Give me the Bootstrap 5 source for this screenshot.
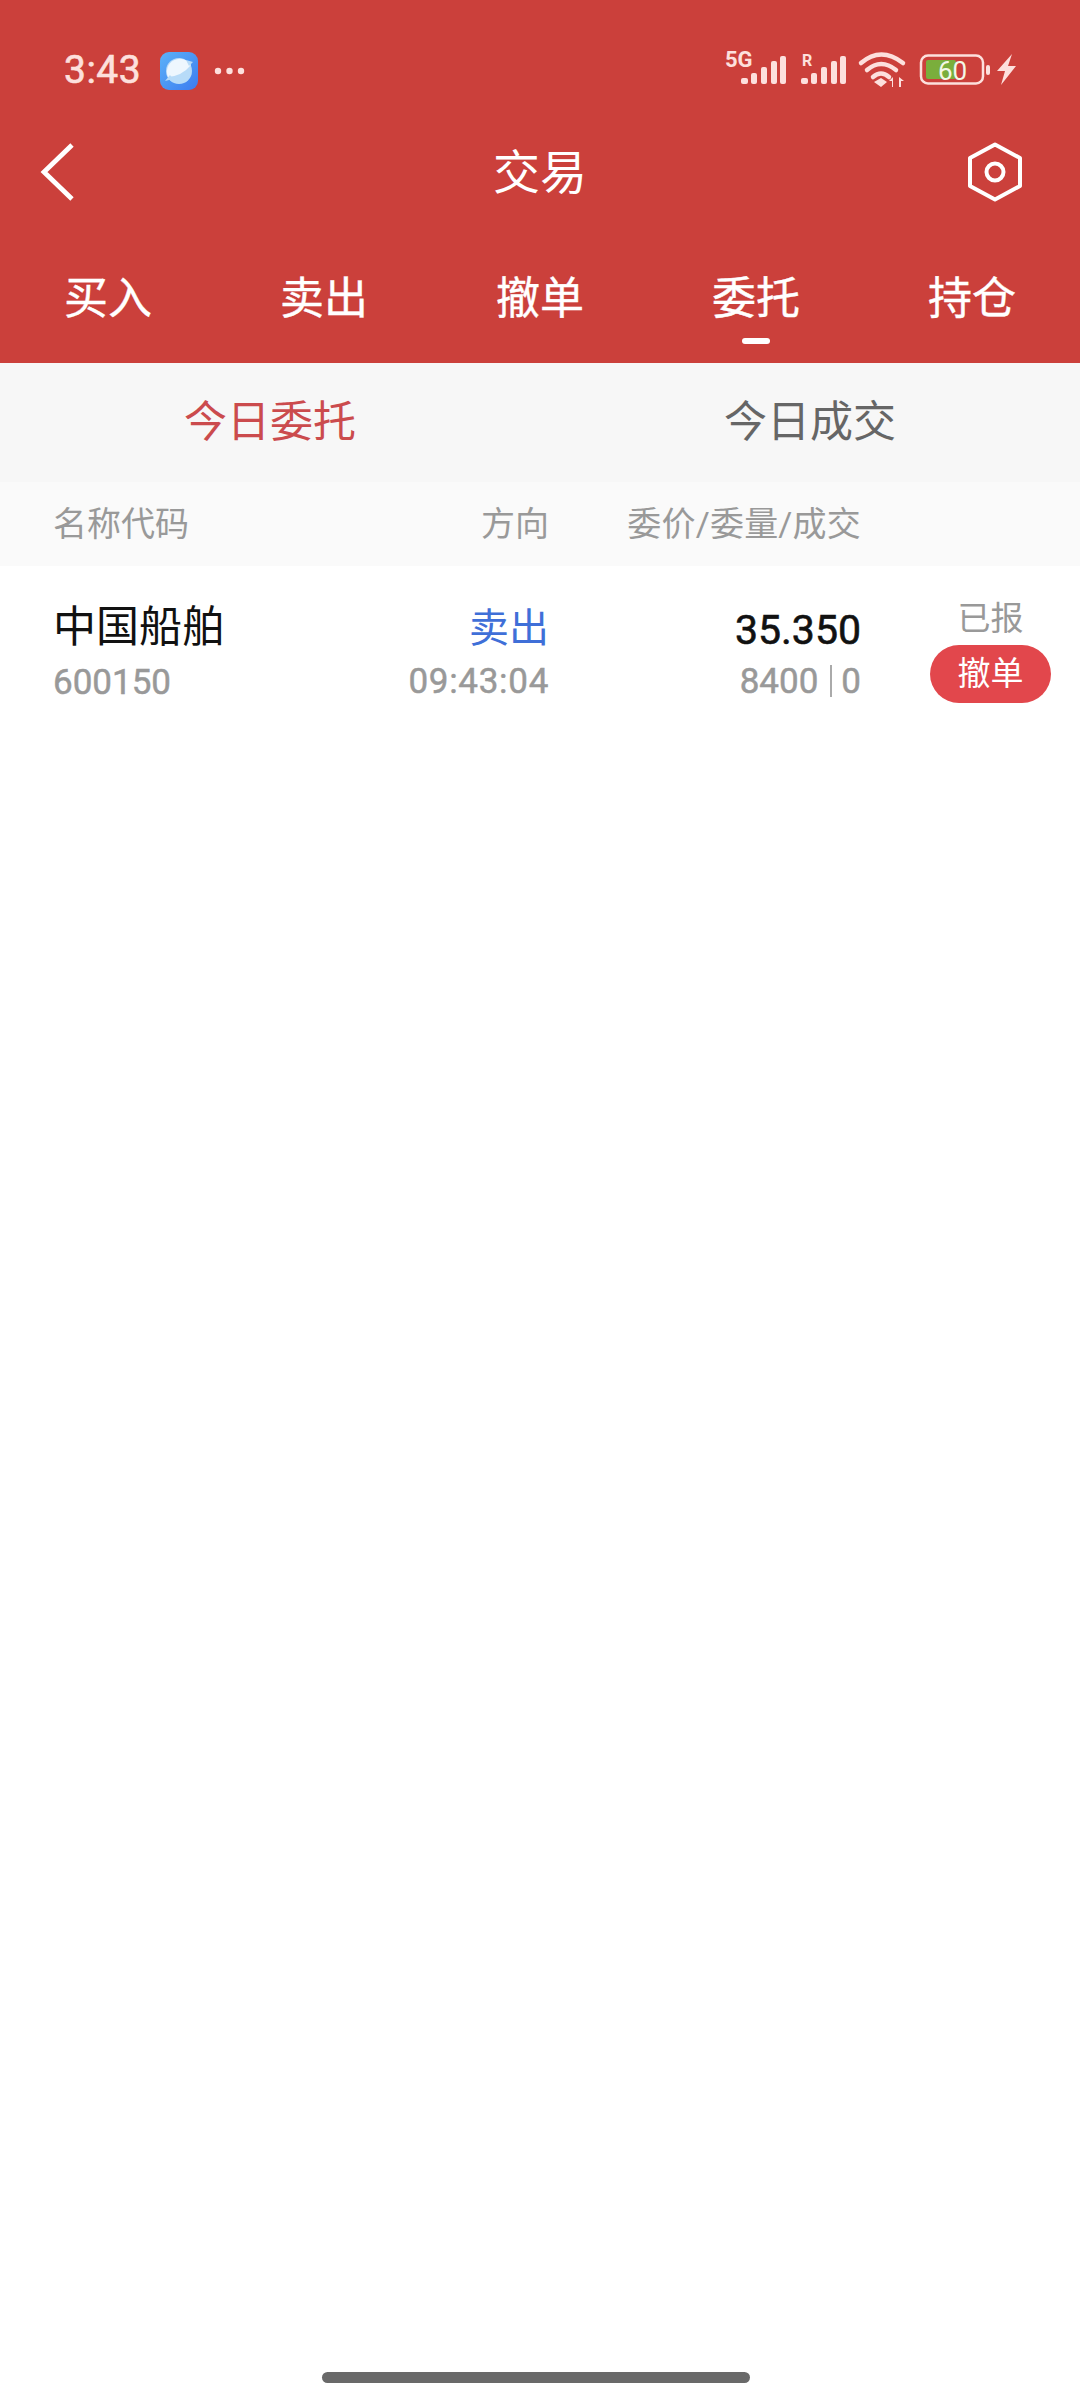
<!DOCTYPE html>
<html lang="zh-CN">
<head>
  <meta charset="UTF-8">
  <title>交易</title>
  <link href="https://cdn.jsdelivr.net/npm/bootstrap@5.3.3/dist/css/bootstrap.min.css" rel="stylesheet">
  <style>
    body { background: #fff; font-family: Roboto, "Noto Sans CJK SC", sans-serif; height: 2400px; position: relative; overflow: hidden; }
    .top-red { background: #cb403b; height: 363px; color: #fff; }
    .status-line { height: 112px; padding: 36px 64px 0 64px; color: #fde0dd; }
    .clock { font-size: 39px; line-height: 68px; width: 80px; letter-spacing: .5px; -webkit-text-stroke: .6px #fde0dd; }
    .title-line { height: 120px; padding: 0 58px 0 40px; }
    .side-left { width: 118px; }
    .side-right { width: 100px; }
    .title-text { font-size: 47px; line-height: 1; }
    .main-tabs { padding: 0 64px; height: 131px; }
    .main-tab { font-size: 44px; line-height: 60px; position: relative; padding-top: 37px; -webkit-text-stroke: .4px #fff; }
    .tab-mark { position: absolute; left: 30px; top: 106px; width: 28px; height: 6px; border-radius: 3px; background: #fff; }
    .sub-tabs { background: #f7f7f7; height: 119px; }
    .sub-tab { width: 50%; text-align: center; font-size: 43px; line-height: 119px; color: #666; }
    .sub-tab.on { color: #cb4b4d; }
    .head-line { background: #fafafa; height: 84px; color: #999; font-size: 34px; line-height: 84px; padding-left: 53px; }
    .head-line .col-price { letter-spacing: .2px; }
    .order-line { padding: 0 0 0 53px; height: 140px; }
    .col-name { width: 300px; }
    .col-dir { width: 196px; text-align: right; }
    .col-price { width: 312px; text-align: right; }
    .col-state { width: 121px; margin-left: 69px; text-align: center; }
    .stock-name { font-size: 43px; line-height: 50px; color: #111; padding-top: 36px; }
    .stock-code { font-size: 35px; line-height: 40px; color: #999; margin-top: 11px; -webkit-text-stroke: .5px #999; }
    .dir-sell { font-size: 40px; line-height: 50px; color: #3f6fd8; padding-top: 38px; }
    .dir-time { font-size: 35px; line-height: 40px; color: #999; margin-top: 8px; letter-spacing: .7px; -webkit-text-stroke: .5px #999; }
    .price-num { font-size: 41px; line-height: 50px; color: #111; padding-top: 39px; -webkit-text-stroke: .6px #111; }
    .price-sub { font-size: 35px; line-height: 40px; color: #999; margin-top: 7px; -webkit-text-stroke: .5px #999; }
    .price-sep { display: inline-block; width: 2px; height: 32px; background: #aaa; margin: 0 9px 0 12px; vertical-align: -4px; }
    .state-text { font-size: 33px; line-height: 44px; color: #999; padding-top: 31px; }
    .cancel-pill { background: #e2474c; color: #fff; border: 0; border-radius: 29px; font-size: 33px; line-height: 58px; height: 58px; width: 121px; padding: 0; display: block; margin-top: 4px; }
    .home-bar { position: absolute; left: 322px; top: 2372px; width: 428px; height: 11px; border-radius: 6px; background: #696969; }
  </style>
</head>
<body>

<div class="top-red">
  <div class="status-line d-flex align-items-start">
    <div class="clock">3:43</div>
    <svg class="ms-3" width="38" height="38" viewBox="0 0 38 38" style="margin-top:16px">
      <defs><linearGradient id="pl" x1="0" y1="0" x2="1" y2="1"><stop offset="0" stop-color="#5cb2f8"/><stop offset="1" stop-color="#3c7bf0"/></linearGradient></defs>
      <rect width="38" height="38" rx="9" fill="url(#pl)"/>
      <circle cx="19" cy="19" r="13" fill="#b7dbf8"/>
      <path d="M8 25 A13 13 0 0 1 31 13 Q22 24 8 25Z" fill="#eef7fe"/>
      <path d="M5 29 L10 23 L13 27Z M33 10 L26 8 L29 14Z" fill="#b7dbf8"/>
    </svg>
    <svg class="ms-3" width="32" height="8" viewBox="0 0 32 8" style="margin-top:31px"><circle cx="4" cy="4" r="3.2" fill="#fde0dd"/><circle cx="15.5" cy="4" r="3.2" fill="#fde0dd"/><circle cx="27" cy="4" r="3.2" fill="#fde0dd"/></svg>
    <svg class="ms-auto" width="296" height="56" viewBox="725 40 296 56" style="margin-right:-5px;margin-top:4px">
      <g fill="#fde0dd">
        <text x="725" y="67" font-family="Roboto" font-size="22" font-weight="700">5G</text>
        <rect x="741" y="78" width="7" height="6" rx="2"/><rect x="751" y="73" width="6" height="11" rx="2"/><rect x="761" y="67" width="6" height="17" rx="2"/><rect x="771" y="61" width="6" height="23" rx="2"/><rect x="780" y="56" width="6" height="28" rx="2"/>
        <text x="802" y="66" font-family="Roboto" font-size="16" font-weight="700">R</text>
        <rect x="801" y="78" width="7" height="6" rx="2"/><rect x="811" y="73" width="6" height="11" rx="2"/><rect x="821" y="67" width="6" height="17" rx="2"/><rect x="831" y="61" width="6" height="23" rx="2"/><rect x="840" y="56" width="6" height="28" rx="2"/>
        <path d="M881 78l-7 4 7 5 6-5z"/>
        <path d="M892 87v-6h-3l4-4v10z M899 77v10h2v-6h3z"/>
      </g>
      <g fill="none" stroke="#fde0dd" stroke-width="4.500" stroke-linecap="round">
        <path d="M861 63 Q881 46 903 63"/><path d="M867 70 Q881 58 896 70"/><path d="M873 77 Q881 70 889 77"/>
      </g>
      <rect x="921" y="55.500" width="62" height="28" rx="7" fill="none" stroke="#fde0dd" stroke-width="2.500"/>
      <rect x="926" y="60" width="30" height="19" rx="2" fill="#7aae3c"/>
      <text x="938" y="80" font-family="Roboto" font-size="26" fill="#f3f7e6">60</text>
      <rect x="986" y="65" width="4" height="10" rx="2" fill="#fde0dd"/>
      <path d="M1012 54 L997 71 H1005 L1001 85 L1016 66 H1008Z" fill="#fde0dd"/>
    </svg>
  </div>

  <div class="title-line d-flex align-items-center justify-content-between">
    <div class="side-left">
      <svg class="d-block" width="34" height="58" viewBox="0 0 34 58"><path d="M32 2 L4 29 L32 56" fill="none" stroke="#fff" stroke-width="4.800"/></svg>
    </div>
    <div class="title-text">交易</div>
    <div class="side-right d-flex justify-content-end">
      <svg class="d-block" width="54" height="60" viewBox="0 0 54 60"><path d="M27 2.500 L52 16 V44 L27 57.500 L2 44 V16Z" fill="none" stroke="#fff" stroke-width="4" stroke-linejoin="round"/><circle cx="27" cy="30" r="8.500" fill="none" stroke="#fff" stroke-width="4"/></svg>
    </div>
  </div>

  <div class="main-tabs d-flex justify-content-between">
    <div class="main-tab">买入</div>
    <div class="main-tab">卖出</div>
    <div class="main-tab">撤单</div>
    <div class="main-tab">委托<span class="tab-mark"></span></div>
    <div class="main-tab">持仓</div>
  </div>
</div>

<div class="sub-tabs d-flex">
  <div class="sub-tab on">今日委托</div>
  <div class="sub-tab">今日成交</div>
</div>

<div class="head-line d-flex">
  <div class="col-name">名称代码</div>
  <div class="col-dir">方向</div>
  <div class="col-price">委价/委量/成交</div>
</div>

<div class="order-line d-flex">
  <div class="col-name">
    <div class="stock-name">中国船舶</div>
    <div class="stock-code">600150</div>
  </div>
  <div class="col-dir">
    <div class="dir-sell">卖出</div>
    <div class="dir-time">09:43:04</div>
  </div>
  <div class="col-price">
    <div class="price-num">35.350</div>
    <div class="price-sub">8400<span class="price-sep"></span>0</div>
  </div>
  <div class="col-state">
    <div class="state-text">已报</div>
    <button class="cancel-pill" type="button">撤单</button>
  </div>
</div>

<div class="home-bar"></div>

<script src="https://cdn.jsdelivr.net/npm/bootstrap@5.3.3/dist/js/bootstrap.bundle.min.js"></script>
</body>
</html>
